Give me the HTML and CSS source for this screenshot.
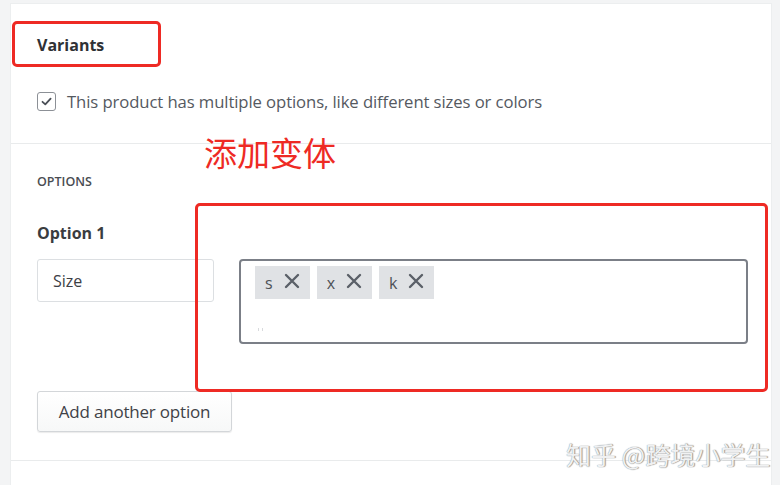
FILE: index.html
```html
<!DOCTYPE html>
<html lang="en">
<head>
    <meta charset="UTF-8">
    <meta name="viewport" content="width=device-width, initial-scale=1.0">
    <title>Variants</title>
    <link rel="stylesheet" href="styles.css">
</head>
<body>

    <div class="card">
        <div class="section head">
            <h2 class="title">Variants</h2>
            <label class="check-row">
                <span class="checkbox">
                    <svg width="13" height="13" viewBox="0 0 13 13"><path d="M2.5 6.8 L5.3 9.4 L10.6 3.6" fill="none" stroke="#4a4f57" stroke-width="1.8" stroke-linecap="round" stroke-linejoin="round"/></svg>
                </span>
                This product has multiple options, like different sizes or colors
            </label>
        </div>

        <div class="section options">
            <div class="caption">OPTIONS</div>
            <div class="option-label">Option 1</div>
            <div class="option-row">
                <div class="text-input">Size</div>
                <div class="tag-input">
                    <div class="tags">
                        <span class="tag">s <svg class="x" width="16" height="16" viewBox="0 0 16 16"><path d="M2 2 L14 14 M14 2 L2 14" stroke="#5b6068" stroke-width="2.4" stroke-linecap="round"/></svg></span>
                        <span class="tag">x <svg class="x" width="16" height="16" viewBox="0 0 16 16"><path d="M2 2 L14 14 M14 2 L2 14" stroke="#5b6068" stroke-width="2.4" stroke-linecap="round"/></svg></span>
                        <span class="tag">k <svg class="x" width="16" height="16" viewBox="0 0 16 16"><path d="M2 2 L14 14 M14 2 L2 14" stroke="#5b6068" stroke-width="2.4" stroke-linecap="round"/></svg></span>
                    </div>
                    <span class="caret"></span>
                </div>
            </div>
            <button class="add-btn">Add another option</button>
        </div>

        <div class="section foot"></div>

        <!-- annotations drawn over the screenshot -->
        <div class="mark mark-title"></div>
        <div class="mark mark-tags"></div>
        <div class="note">添加变体</div>
        <div class="watermark">知乎 @跨境小学生</div>
    </div>

</body>
</html>
```

FILE: styles.css
```css
body {
    margin: 0;
    background-color: #f3f4f5;
    font-family: "Open Sans", "Noto Sans", sans-serif;
    color: #333;
}
.card {
    position: relative;
    margin: 4px 9px 0 11px;
    background-color: #fff;
    box-shadow: 0 0 0 1px #eceeef;
    height: 490px;
}
.section {
    padding: 0 26px;
    border-bottom: 1px solid #e9ebec;
}
.head {
    height: 138px;
    padding-top: 1px;
}
.title {
    margin: 29px 0 0;
    font-size: 16px;
    font-weight: 700;
    color: #2f3135;
    line-height: 22px;
}
.check-row {
    display: flex;
    align-items: center;
    gap: 11px;
    margin-top: 34px;
    font-size: 16.7px;
    color: #55595f;
    letter-spacing: -0.1px;
}
.checkbox {
    width: 17px;
    height: 17px;
    border: 1.5px solid #8c9096;
    border-radius: 3px;
    display: flex;
    align-items: center;
    justify-content: center;
}
.options {
    height: 315px;
    padding-top: 1px;
}
.caption {
    margin-top: 29px;
    font-size: 12.5px;
    font-weight: 600;
    color: #4a4d52;
    line-height: 16px;
}
.option-label {
    margin-top: 32px;
    font-size: 16px;
    font-weight: 700;
    color: #3a3c40;
    line-height: 22px;
}
.option-row {
    display: grid;
    grid-template-columns: 177px 509px;
    gap: 25px;
    align-items: start;
    margin-top: 15px;
}
.text-input {
    height: 41px;
    border: 1px solid #dcdfe2;
    border-radius: 3px;
    padding-left: 15px;
    display: flex;
    align-items: center;
    font-size: 16px;
    color: #3d4045;
}
.tag-input {
    position: relative;
    box-sizing: border-box;
    height: 85px;
    border: 2px solid #7b7f87;
    border-radius: 4px;
    padding: 5px 14px;
}
.tags {
    display: flex;
    gap: 7px;
}
.tag {
    display: flex;
    align-items: center;
    gap: 11px;
    height: 33px;
    padding: 1px 10px 0 10px;
    background-color: #e0e2e5;
    font-size: 16px;
    color: #4d5157;
    box-sizing: border-box;
}
.x {
    margin-top: -4px;
}
.caret {
    position: absolute;
    left: 17px;
    top: 67px;
    width: 3px;
    height: 3px;
    border-left: 1px solid #d8dadd;
    border-right: 1px solid #d8dadd;
}
.add-btn {
    margin-top: 47px;
    width: 195px;
    height: 41px;
    background: linear-gradient(#ffffff, #f7f8f8);
    border: 1px solid #d3d6d9;
    border-radius: 3px;
    box-shadow: 0 1px 1px rgba(0, 0, 0, 0.08);
    font-family: "Open Sans", sans-serif;
    font-size: 17px;
    color: #3f4247;
    letter-spacing: -0.2px;
}
.foot {
    border-bottom: none;
}
.mark {
    position: absolute;
    border: 3px solid #ee2a24;
    border-radius: 5px;
}
.mark-title {
    left: 1px;
    top: 17px;
    width: 143px;
    height: 40px;
}
.mark-tags {
    left: 184px;
    top: 199px;
    width: 567px;
    height: 183px;
}
.note {
    position: absolute;
    left: 193px;
    top: 128px;
    font-family: "Noto Sans CJK SC", sans-serif;
    font-size: 33px;
    line-height: 40px;
    color: #ee2a24;
}
.watermark {
    position: absolute;
    left: 555px;
    top: 434px;
    font-family: "Noto Sans CJK SC", sans-serif;
    font-size: 25px;
    line-height: 32px;
    color: #f0f1f2;
    text-shadow: 0 0 1px #7d8084, 1px 0 1px #9a9c9f;
}
```
